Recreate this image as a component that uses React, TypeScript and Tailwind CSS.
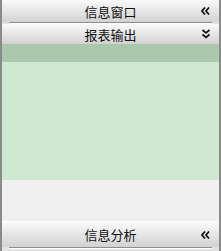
const font = { fontFamily: '"Noto Sans CJK SC", "Noto Sans", sans-serif' }

function ChevronsLeft() {
  return (
    <svg width="9" height="8" viewBox="0 0 9 8" className="shrink-0">
      <path d="M4 0.5 L1 4 L4 7.5 M8 0.5 L5 4 L8 7.5" fill="none" stroke="#111" strokeWidth="1.7" />
    </svg>
  )
}

function ChevronsDown() {
  return (
    <svg width="8" height="10" viewBox="0 0 8 10" className="shrink-0">
      <path d="M0.5 1 L4 4 L7.5 1 M0.5 5.5 L4 8.5 L7.5 5.5" fill="none" stroke="#111" strokeWidth="1.7" />
    </svg>
  )
}

function Header({ title, icon, h }: { title: string; icon: React.ReactNode; h: string }) {
  return (
    <div className={`relative flex items-center justify-center ${h} bg-gradient-to-b from-[#fafafa] to-[#d2d2d2]`}>
      <span className="text-[13px] leading-none text-[#111]">{title}</span>
      <div className="absolute right-[9px] top-0 bottom-0 flex items-center">{icon}</div>
    </div>
  )
}

function Divider() {
  return (
    <div className="flex h-[2px] bg-[#e2e2e2] px-[7px]">
      <div className="flex-1 border-t border-[#8e8e8e] border-b border-b-white h-[2px]" />
    </div>
  )
}

export default function App() {
  return (
    <div className="w-[221px] h-[251px] flex flex-col bg-[#f0f0f0] border-x-2 border-[#8a8a8a]" style={font}>
      <Header title="信息窗口" icon={<ChevronsLeft />} h="h-[22px]" />
      <Divider />
      <Header title="报表输出" icon={<ChevronsDown />} h="h-[20px]" />
      <div className="h-[18px] bg-[#abc8ae]" />
      <div className="h-[118px] bg-[#cfe8d2]" />
      <div className="flex-1 bg-[#f0f0f0]" />
      <div className="border-t border-white">
        <Header title="信息分析" icon={<ChevronsLeft />} h="h-[25px]" />
      </div>
      <Divider />
      <div className="h-[2px] bg-[#e2e2e2]" />
    </div>
  )
}
